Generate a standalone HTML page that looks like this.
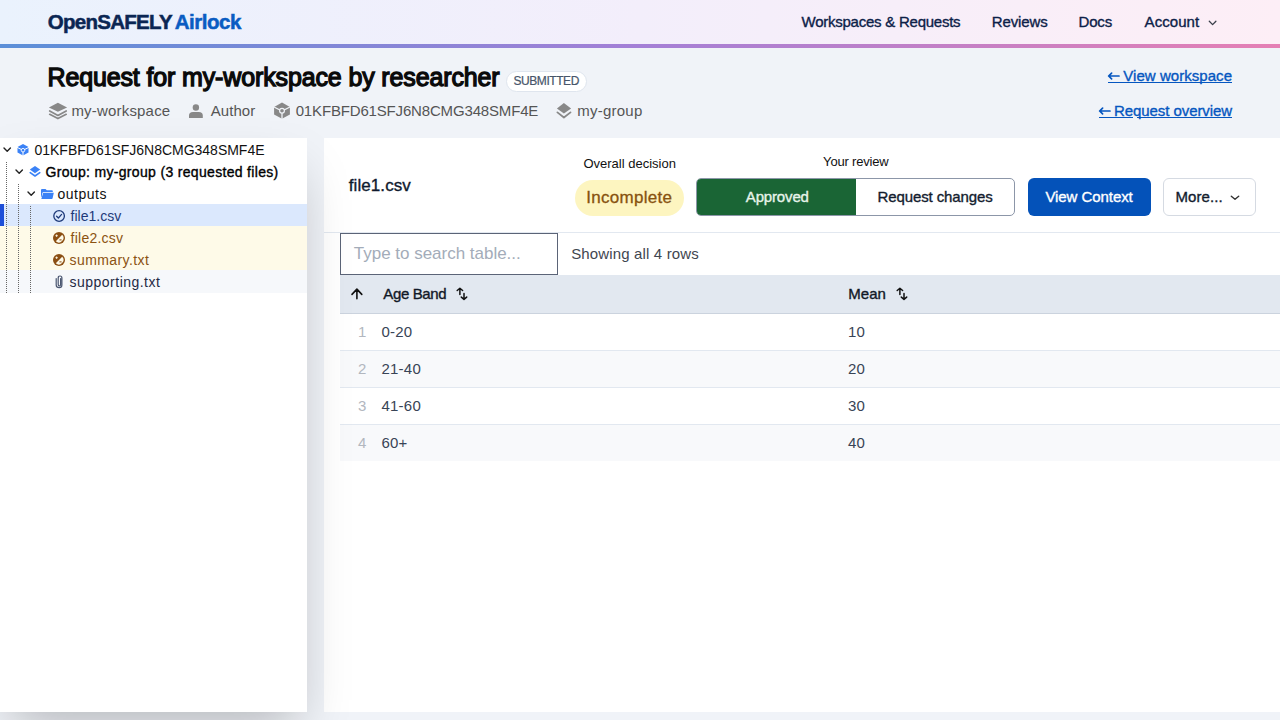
<!DOCTYPE html>
<html>
<head>
<meta charset="utf-8">
<style>
html,body{margin:0;padding:0;}
body{width:1280px;height:720px;overflow:hidden;position:relative;background:#f0f3f8;font-family:"Liberation Sans",sans-serif;}
.t{position:absolute;white-space:pre;}
.sb{-webkit-text-stroke:0.35px currentColor;}
svg{position:absolute;overflow:visible;}
#hdr{position:absolute;left:0;top:0;width:1280px;height:44px;background:linear-gradient(to right,#eaf2fd,#f3eefb 50%,#fdeef6);}
#hline{position:absolute;left:0;top:44px;width:1280px;height:4px;background:linear-gradient(to right,#5b8fd8,#a47fd6 50%,#e57fb4);}
#left{position:absolute;z-index:1;left:0;top:138px;width:307px;height:574px;background:#fff;box-shadow:0 25px 50px -12px rgba(0,0,0,.25);}
#right{position:absolute;left:324px;top:138px;width:956px;height:574px;background:#fff;}
</style>
</head>
<body>
<div id="hdr"></div>
<div id="hline"></div>

<!-- logo -->
<div class="t" style="left:47.8px;top:11.6px;font-size:20.5px;line-height:20.5px;font-weight:700;letter-spacing:-0.728px;color:#0b2653;-webkit-text-stroke:0.5px #0b2653">OpenSAFELY</div>
<div class="t" style="left:174.7px;top:11.6px;font-size:20.5px;line-height:20.5px;font-weight:700;letter-spacing:-0.467px;color:#0a5cc2;-webkit-text-stroke:0.5px #0a5cc2">Airlock</div>

<!-- nav -->
<div class="t sb" style="left:801.5px;top:14px;font-size:15px;line-height:15px;letter-spacing:-0.242px;color:#0c2148">Workspaces &amp; Requests</div>
<div class="t sb" style="left:991.7px;top:14px;font-size:15px;line-height:15px;letter-spacing:-0.117px;color:#0c2148">Reviews</div>
<div class="t sb" style="left:1078.6px;top:14px;font-size:15px;line-height:15px;letter-spacing:-0.2px;color:#0c2148">Docs</div>
<div class="t sb" style="left:1144.6px;top:14px;font-size:15px;line-height:15px;letter-spacing:0.067px;color:#0c2148">Account</div>
<svg style="left:1207.5px;top:20px" width="10" height="7" viewBox="0 0 10 7"><path d="M1.3 1.2 L4.6 4.6 L7.9 1.2" fill="none" stroke="#3a3f4a" stroke-width="1.3" stroke-linecap="round" stroke-linejoin="round"/></svg>

<!-- title -->
<div class="t" style="left:47.5px;top:64.5px;font-size:25px;line-height:25px;font-weight:400;letter-spacing:-0.135px;color:#0a0a0a;-webkit-text-stroke:1.3px #0a0a0a">Request for my-workspace by researcher</div>
<div style="position:absolute;left:506px;top:70.5px;width:79px;height:19px;border:1px solid #dfe5ee;border-radius:11px;background:#fff"></div>
<div class="t" style="left:513.5px;top:74.9px;font-size:12px;line-height:12px;letter-spacing:-0.438px;color:#475569;-webkit-text-stroke:0.2px #475569">SUBMITTED</div>

<!-- meta row -->
<svg style="left:48px;top:102px" width="20" height="18" viewBox="0 0 20 18">
  <path d="M9.9 0.75 L19.1 5.4 L9.9 9.8 L0.9 5.4 Z" fill="#888"/>
  <path d="M1.7 9 L9.9 13.5 L18.2 9" fill="none" stroke="#888" stroke-width="1.7" stroke-linecap="round" stroke-linejoin="round"/>
  <path d="M1.7 12.3 L9.9 16.6 L18.2 12.3" fill="none" stroke="#888" stroke-width="1.7" stroke-linecap="round" stroke-linejoin="round"/>
</svg>
<div class="t" style="left:71.4px;top:103px;font-size:15px;line-height:15px;letter-spacing:0.191px;color:#555">my-workspace</div>
<svg style="left:188px;top:103px" width="16" height="16" viewBox="0 0 16 16">
  <circle cx="7.9" cy="4.5" r="3.2" fill="#888"/>
  <path d="M1 15 L1 12.5 Q1 9 5 9 L10.8 9 Q14.8 9 14.8 12.5 L14.8 15 Z" fill="#888"/>
</svg>
<div class="t" style="left:210.7px;top:103px;font-size:15px;line-height:15px;letter-spacing:0.06px;color:#555">Author</div>
<svg style="left:274px;top:102px" width="16" height="17" viewBox="0 0 16 17">
  <path d="M8 0.6 L15.9 4.9 L15.9 12.6 L8 16.7 L0.1 12.6 L0.1 4.9 Z" fill="#888"/>
  <path d="M0 5 L8 9 L16 5 M8 9 L8 17" fill="none" stroke="#f0f3f8" stroke-width="1.3"/>
  <circle cx="8" cy="8.8" r="2.4" fill="#888" stroke="#f0f3f8" stroke-width="1.2"/>
</svg>
<div class="t" style="left:295.7px;top:103px;font-size:15px;line-height:15px;letter-spacing:-0.164px;color:#555">01KFBFD61SFJ6N8CMG348SMF4E</div>
<svg style="left:556px;top:102px" width="16" height="17" viewBox="0 0 16 17">
  <path d="M7.9 0.9 L15.1 6.4 L7.9 11.6 L0.9 6.4 Z" fill="#888"/>
  <path d="M1.4 10.4 L7.9 15.5 L14.5 10.4" fill="none" stroke="#888" stroke-width="1.8" stroke-linecap="round" stroke-linejoin="round"/>
</svg>
<div class="t" style="left:577.3px;top:103px;font-size:15px;line-height:15px;letter-spacing:0.229px;color:#555">my-group</div>

<!-- right links -->
<svg style="left:1107px;top:72px" width="14" height="9" viewBox="0 0 14 9"><path d="M12 4 L2 4 M4.6 1.2 L1.6 4 L4.6 6.8" fill="none" stroke="#0556c0" stroke-width="1.7" stroke-linecap="round" stroke-linejoin="round"/></svg>
<div class="t sb" style="left:1123.3px;top:67.8px;font-size:15px;line-height:15px;letter-spacing:0.046px;color:#0556c0">View workspace</div>
<div style="position:absolute;left:1108px;top:82px;width:124px;height:1.3px;background:#0556c0"></div>
<svg style="left:1098px;top:107px" width="14" height="9" viewBox="0 0 14 9"><path d="M12 4 L2 4 M4.6 1.2 L1.6 4 L4.6 6.8" fill="none" stroke="#0556c0" stroke-width="1.7" stroke-linecap="round" stroke-linejoin="round"/></svg>
<div class="t sb" style="left:1114px;top:102.8px;font-size:15px;line-height:15px;letter-spacing:-0.073px;color:#0556c0">Request overview</div>
<div style="position:absolute;left:1099px;top:117px;width:34px;height:1.3px;background:#0556c0"></div>
<div style="position:absolute;left:1137px;top:117px;width:95px;height:1.3px;background:#0556c0"></div>

<!-- left panel -->

<!-- left panel tree -->
<div id="left">
  <div style="position:absolute;left:0;top:66px;width:307px;height:22px;background:#dbe8fd"></div>
  <div style="position:absolute;left:0;top:66px;width:4px;height:22px;background:#1d4ed8"></div>
  <div style="position:absolute;left:0;top:88px;width:307px;height:44px;background:#fefae8"></div>
  <div style="position:absolute;left:0;top:132px;width:307px;height:23px;background:#f6f8fb"></div>
  <div style="position:absolute;left:6px;top:24px;width:0;height:131px;border-left:1px dotted #666"></div>
  <div style="position:absolute;left:18px;top:46px;width:0;height:109px;border-left:1px dotted #666"></div>
  <div style="position:absolute;left:30px;top:68px;width:0;height:87px;border-left:1px dotted #666"></div>
</div>
<div style="position:absolute;left:0;top:0;z-index:2">
<svg style="left:3px;top:147px" width="9" height="6" viewBox="0 0 9 6"><path d="M1 1 L4.2 4.2 L7.4 1" fill="none" stroke="#222" stroke-width="1.4" stroke-linecap="round" stroke-linejoin="round"/></svg>
<svg style="left:17px;top:144px" width="12" height="12" viewBox="0 0 12 12">
  <path d="M6 0 L11.5 3 L11.5 8.6 L6 11.6 L0.5 8.6 L0.5 3 Z" fill="#3b82f6"/>
  <path d="M0 3.3 L6 6.3 L12 3.3 M6 6.3 L6 12" fill="none" stroke="#fff" stroke-width="1"/>
  <circle cx="6" cy="6.2" r="1.8" fill="#3b82f6" stroke="#fff" stroke-width="0.9"/>
</svg>
<div class="t" style="left:34.5px;top:142.6px;font-size:14px;line-height:14px;letter-spacing:-0.012px;color:#111">01KFBFD61SFJ6N8CMG348SMF4E</div>

<svg style="left:15px;top:169px" width="9" height="6" viewBox="0 0 9 6"><path d="M1 1 L4.2 4.2 L7.4 1" fill="none" stroke="#222" stroke-width="1.4" stroke-linecap="round" stroke-linejoin="round"/></svg>
<svg style="left:29px;top:165px" width="12" height="13" viewBox="0 0 12 13">
  <path d="M6 1 L11.2 4.6 L6 8.2 L0.8 4.6 Z" fill="#3b82f6"/>
  <path d="M1.2 7.6 L6 11 L10.8 7.6" fill="none" stroke="#3b82f6" stroke-width="1.6" stroke-linecap="round" stroke-linejoin="round"/>
</svg>
<div class="t" style="left:45.5px;top:164.5px;font-size:14px;line-height:14px;font-weight:400;letter-spacing:0.324px;color:#000;-webkit-text-stroke:0.35px #000">Group: my-group (3 requested files)</div>

<svg style="left:27px;top:191px" width="9" height="6" viewBox="0 0 9 6"><path d="M1 1 L4.2 4.2 L7.4 1" fill="none" stroke="#222" stroke-width="1.4" stroke-linecap="round" stroke-linejoin="round"/></svg>
<svg style="left:41px;top:189px" width="13" height="10" viewBox="0 0 13 10">
  <path d="M0 1 Q0 0 1 0 L4.5 0 L5.8 1.3 L11 1.3 Q11.8 1.3 11.8 2.1 L11.8 3 L2.6 3 Q1.6 3 1.4 4 L0.5 8 L0 8 Z" fill="#3b82f6"/>
  <path d="M2.2 3.8 L12.8 3.8 L11.6 9.3 Q11.5 9.9 10.8 9.9 L0.3 9.9 Z" fill="#3b82f6"/>
</svg>
<div class="t" style="left:57.4px;top:186.6px;font-size:14px;line-height:14px;letter-spacing:0.533px;color:#111">outputs</div>

<svg style="left:53px;top:210px" width="13" height="13" viewBox="0 0 13 13">
  <circle cx="6.1" cy="6" r="5.3" fill="none" stroke="#1e3a7a" stroke-width="1.3"/>
  <path d="M3.6 6.3 L5.4 8 L8.6 4.4" fill="none" stroke="#1e3a7a" stroke-width="1.3" stroke-linecap="round" stroke-linejoin="round"/>
</svg>
<div class="t" style="left:70.6px;top:208.6px;font-size:14px;line-height:14px;letter-spacing:0px;color:#1e3a7a">file1.csv</div>

<svg style="left:53px;top:232px" width="13" height="13" viewBox="0 0 13 13">
  <circle cx="6" cy="6" r="6" fill="#8b4e12"/>
  <path d="M9.18 2.82 A4.5 4.5 0 0 1 2.82 9.18 Z" fill="#fefae8"/>
  <path d="M2.4 3.7 L4.8 3.7 M3.6 2.5 L3.6 4.9" stroke="#fefae8" stroke-width="0.9"/>
  <path d="M6.4 7.9 L8.6 7.9" stroke="#8b4e12" stroke-width="1"/>
</svg>
<div class="t" style="left:70.6px;top:230.5px;font-size:14px;line-height:14px;letter-spacing:0.225px;color:#8b5212">file2.csv</div>
<svg style="left:53px;top:254px" width="13" height="13" viewBox="0 0 13 13">
  <circle cx="6" cy="6" r="6" fill="#8b4e12"/>
  <path d="M9.18 2.82 A4.5 4.5 0 0 1 2.82 9.18 Z" fill="#fefae8"/>
  <path d="M2.4 3.7 L4.8 3.7 M3.6 2.5 L3.6 4.9" stroke="#fefae8" stroke-width="0.9"/>
  <path d="M6.4 7.9 L8.6 7.9" stroke="#8b4e12" stroke-width="1"/>
</svg>
<div class="t" style="left:69.6px;top:252.9px;font-size:14px;line-height:14px;letter-spacing:0.4px;color:#8b5212">summary.txt</div>

<svg style="left:55px;top:275px" width="9" height="14" viewBox="0 0 9 14">
  <path d="M5.6 3.6 L5.6 9.6 Q5.6 11 4.4 11 Q3.2 11 3.2 9.6 L3.2 3 Q3.2 1 5 1 Q6.9 1 6.9 3 L6.9 10 Q6.9 12.6 4.2 12.6 Q1.2 12.6 1.2 10 L1.2 3.6" fill="none" stroke="#4a5670" stroke-width="1.2" stroke-linecap="round"/>
</svg>
<div class="t" style="left:69.6px;top:274.6px;font-size:14px;line-height:14px;letter-spacing:0.477px;color:#1f2a44">supporting.txt</div>
</div>
<div id="right"></div>

<div class="t sb" style="left:348.8px;top:177px;font-size:17px;line-height:17px;letter-spacing:0.075px;color:#0f1a2e">file1.csv</div>

<div class="t" style="left:583.4px;top:157px;font-size:13px;line-height:13px;letter-spacing:0.007px;color:#111">Overall decision</div>
<div style="position:absolute;left:575px;top:180px;width:109px;height:36px;border-radius:18px;background:#fdf5c0"></div>
<div class="t" style="left:586.3px;top:188.9px;font-size:17px;line-height:17px;letter-spacing:0.267px;color:#87520f;-webkit-text-stroke:0.3px #87520f">Incomplete</div>

<div class="t" style="left:823.1px;top:155px;font-size:13px;line-height:13px;letter-spacing:-0.19px;color:#111">Your review</div>
<div style="position:absolute;left:696px;top:178px;width:317px;height:36px;border:1px solid #8c96a8;border-radius:5px;background:#fff;overflow:hidden">
  <div style="position:absolute;left:-1px;top:-1px;width:160px;height:38px;background:#1a6535"></div>
</div>
<div class="t sb" style="left:745.8px;top:189.3px;font-size:15px;line-height:15px;letter-spacing:-0.157px;color:#e8f4ea">Approved</div>
<div class="t sb" style="left:877.6px;top:189.3px;font-size:15px;line-height:15px;letter-spacing:-0.114px;color:#131c2e">Request changes</div>

<div style="position:absolute;left:1028px;top:178px;width:123px;height:38px;border-radius:6px;background:#0452b9"></div>
<div class="t sb" style="left:1045.4px;top:189.2px;font-size:15px;line-height:15px;letter-spacing:-0.064px;color:#fff">View Context</div>

<div style="position:absolute;left:1163px;top:178px;width:91px;height:36px;border:1px solid #d5dae2;border-radius:6px;background:#fff"></div>
<div class="t sb" style="left:1175.4px;top:189.2px;font-size:15px;line-height:15px;letter-spacing:0.117px;color:#131c2e">More...</div>
<svg style="left:1230px;top:195px" width="10" height="6" viewBox="0 0 10 6"><path d="M1.3 1.2 L5 4.3 L8.7 1.2" fill="none" stroke="#333" stroke-width="1.4" stroke-linecap="round" stroke-linejoin="round"/></svg>

<div style="position:absolute;left:324px;top:232px;width:956px;height:1px;background:#e2e8f0"></div>

<div style="position:absolute;left:340px;top:233px;width:216px;height:40px;border:1px solid #5b6477;background:#fff"></div>
<div class="t" style="left:353.8px;top:245.4px;font-size:17px;line-height:17px;letter-spacing:-0.014px;color:#a3acb9">Type to search table...</div>
<div class="t" style="left:571.2px;top:246.1px;font-size:15px;line-height:15px;letter-spacing:0.147px;color:#3f4650">Showing all 4 rows</div>

<!-- table -->
<div style="position:absolute;left:340px;top:275px;width:940px;height:38px;background:#e2e8f0;border-bottom:1px solid #cbd3de"></div>
<div style="position:absolute;left:340px;top:314px;width:940px;height:36px;background:#fff"></div>
<div style="position:absolute;left:340px;top:350px;width:940px;height:1px;background:#e2e8f0"></div>
<div style="position:absolute;left:340px;top:351px;width:940px;height:36px;background:#f8f9fb"></div>
<div style="position:absolute;left:340px;top:387px;width:940px;height:1px;background:#e2e8f0"></div>
<div style="position:absolute;left:340px;top:388px;width:940px;height:36px;background:#fff"></div>
<div style="position:absolute;left:340px;top:424px;width:940px;height:1px;background:#e2e8f0"></div>
<div style="position:absolute;left:340px;top:425px;width:940px;height:36px;background:#f8f9fb"></div>

<svg style="left:350px;top:288px" width="14" height="12" viewBox="0 0 14 12"><path d="M2 6.4 L6.9 1.1 L11.8 6.4 M6.9 1.4 L6.9 10.7" fill="none" stroke="#111" stroke-width="1.6" stroke-linecap="round" stroke-linejoin="round"/></svg>
<div class="t sb" style="left:383.3px;top:285.8px;font-size:15px;line-height:15px;letter-spacing:-0.357px;color:#111827">Age Band</div>
<svg style="left:455px;top:287px" width="14" height="14" viewBox="0 0 14 14"><path d="M2.2 3.5 L4.9 1.2 L7.6 3.5 M4.9 1.6 L4.9 7.4 M6.3 10.1 L9 12.4 L11.7 10.1 M9 6.6 L9 12" fill="none" stroke="#111" stroke-width="1.5" stroke-linecap="round" stroke-linejoin="round"/></svg>
<div class="t sb" style="left:848.3px;top:285.8px;font-size:15px;line-height:15px;letter-spacing:0.033px;color:#111827">Mean</div>
<svg style="left:895px;top:287px" width="14" height="14" viewBox="0 0 14 14"><path d="M2.2 3.5 L4.9 1.2 L7.6 3.5 M4.9 1.6 L4.9 7.4 M6.3 10.1 L9 12.4 L11.7 10.1 M9 6.6 L9 12" fill="none" stroke="#111" stroke-width="1.5" stroke-linecap="round" stroke-linejoin="round"/></svg>
<div class="t" style="left:358px;top:324.1px;font-size:15px;line-height:15px;color:#b2b7bf">1</div>
<div class="t" style="left:381.4px;top:324.1px;font-size:15px;line-height:15px;letter-spacing:0.267px;color:#384456">0-20</div>
<div class="t" style="left:848px;top:324.1px;font-size:15px;line-height:15px;letter-spacing:0.2px;color:#384456">10</div>
<div class="t" style="left:358px;top:361.1px;font-size:15px;line-height:15px;color:#b2b7bf">2</div>
<div class="t" style="left:381.4px;top:361.1px;font-size:15px;line-height:15px;letter-spacing:0.267px;color:#384456">21-40</div>
<div class="t" style="left:848px;top:361.1px;font-size:15px;line-height:15px;letter-spacing:0.2px;color:#384456">20</div>
<div class="t" style="left:358px;top:398.1px;font-size:15px;line-height:15px;color:#b2b7bf">3</div>
<div class="t" style="left:381.4px;top:398.1px;font-size:15px;line-height:15px;letter-spacing:0.267px;color:#384456">41-60</div>
<div class="t" style="left:848px;top:398.1px;font-size:15px;line-height:15px;letter-spacing:0.2px;color:#384456">30</div>
<div class="t" style="left:358px;top:435.1px;font-size:15px;line-height:15px;color:#b2b7bf">4</div>
<div class="t" style="left:381.4px;top:435.1px;font-size:15px;line-height:15px;letter-spacing:0.267px;color:#384456">60+</div>
<div class="t" style="left:848px;top:435.1px;font-size:15px;line-height:15px;letter-spacing:0.2px;color:#384456">40</div>

</body>
</html>
